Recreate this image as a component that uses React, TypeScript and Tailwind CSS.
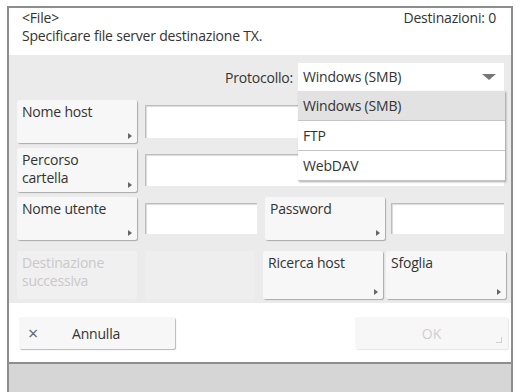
import React from 'react'

const font = { fontFamily: '"Open Sans", "Liberation Sans", sans-serif' }

// Piccola freccia nell'angolo in basso a destra dei tasti
const Arrow = () => (
  <span className="absolute right-[5px] bottom-[4px] w-0 h-0 border-y-[3px] border-y-transparent border-l-[4px] border-l-[#666]" />
)

interface KeyProps {
  label: React.ReactNode
  disabled?: boolean
  className?: string
}

const Key: React.FC<KeyProps> = ({ label, disabled = false, className = '' }) => (
  <div
    className={`relative w-[120px] shrink-0 rounded-[2px] px-[5px] pt-[3px] text-[14px] tracking-[-0.2px] leading-[17px] ${
      disabled
        ? 'bg-[#f0f0f0] text-[#c9c9c9]'
        : 'bg-[#f7f7f7] text-[#333] shadow-[1px_1px_1px_rgba(0,0,0,0.28)]'
    } ${className}`}
  >
    {label}
    {!disabled && <Arrow />}
  </div>
)

const Field: React.FC<{ className?: string }> = ({ className = '' }) => (
  <div className={`bg-white border-t border-l border-[#bdbdbd] shadow-[inset_1px_1px_1px_rgba(0,0,0,0.15)] ${className}`} />
)

const App: React.FC = () => {
  const options = ['Windows (SMB)', 'FTP', 'WebDAV']

  return (
    <div className="w-[520px] h-[392px] bg-white overflow-hidden pl-[7px] pt-[6px] pr-[7px]" style={font}>
      <div className="h-[386px] flex flex-col border-t-2 border-x-2 border-[#8d8d8d]">
        {/* Intestazione */}
        <div className="h-[47px] shrink-0 flex justify-between pl-[13px] pr-[15px] text-[14px] tracking-[-0.2px] leading-[19px] text-[#333]">
          <div>
            <div>&lt;File&gt;</div>
            <div className="-mt-[1px]">Specificare file server destinazione TX.</div>
          </div>
          <div>Destinazioni: 0</div>
        </div>

        {/* Pannello impostazioni */}
        <div className="relative h-[248px] shrink-0 bg-[#ebebeb] pl-[8px] pr-[5px] pt-[8px] text-[#333] tracking-[-0.2px]">
          <div className="flex items-center justify-end h-[28px] pr-[2px]">
            <span className="text-[14px] mr-[5px]">Protocollo:</span>
            <div className="relative w-[206px] h-[28px] bg-white text-[14px] leading-[28px] pl-[5px]">
              Windows (SMB)
              <span className="absolute right-[8px] top-[11px] w-0 h-0 border-x-[7px] border-x-transparent border-t-[6px] border-t-[#777]" />
            </div>
          </div>

          <div className="mt-[9px] flex flex-col gap-[5px]">
            <div className="flex h-[43px] gap-[8px]">
              <Key label="Nome host" />
              <Field className="flex-1 my-[5px] mr-[2px]" />
            </div>
            <div className="flex h-[44px] gap-[8px]">
              <Key label={<>Percorso<br />cartella</>} className="leading-[18px] pt-[0px]" />
              <Field className="flex-1 my-[6px] mr-[2px]" />
            </div>
            <div className="flex h-[43px]">
              <Key label="Nome utente" />
              <Field className="w-[112px] my-[6px] ml-[8px]" />
              <Key label="Password" className="ml-[8px]" />
              <Field className="flex-1 my-[6px] ml-[6px] mr-[2px]" />
            </div>
            <div className="flex h-[48px] mt-[6px]">
              <Key label={<>Destinazione<br />successiva</>} disabled className="leading-[18px] pt-[3px]" />
              <div className="w-[112px] ml-[8px] bg-[#eeeeee]" />
              <Key label="Ricerca host" className="ml-[8px]" />
              <Key label="Sfoglia" className="ml-[3px]" />
            </div>
          </div>

          {/* Menu a tendina aperto */}
          <div className="absolute left-[289px] top-[36px] w-[207px] bg-white shadow-[1px_1px_2px_rgba(0,0,0,0.35)] text-[14px]">
            {options.map((opt, i) => (
              <div
                key={opt}
                className={`h-[30px] leading-[30px] pl-[5px] border-b border-[#c4c4c4] ${
                  i === 0 ? 'bg-[#e2e2e2]' : 'bg-white'
                }`}
              >
                {opt}
              </div>
            ))}
          </div>
        </div>

        {/* Piè di pagina */}
        <div className="h-[59px] shrink-0 flex items-start justify-between pl-[10px] pr-[3px] pt-[14px]">
          <div className="flex items-center w-[156px] h-[32px] bg-[#f7f7f7] rounded-[2px] shadow-[1px_1px_1px_rgba(0,0,0,0.28)] text-[14px] tracking-[-0.2px] text-[#333]">
            <span className="w-[30px] pl-[9px] text-[18px] text-[#666] leading-none">×</span>
            <span className="ml-[23px]">Annulla</span>
          </div>
          <div className="relative flex items-center justify-center w-[153px] h-[32px] bg-[#f7f7f7] rounded-[2px] shadow-[1px_1px_1px_rgba(0,0,0,0.1)] text-[14px] text-[#cfcfcf]">
            OK
            <span className="absolute right-[6px] bottom-[6px] w-[6px] h-[6px] border-r border-b border-[#d0d0d0]" />
          </div>
        </div>

        {/* Barra di stato */}
        <div className="flex-1 border-t-2 border-[#8d8d8d] bg-[#d6d6d6]" />
      </div>
    </div>
  )
}

export default App
